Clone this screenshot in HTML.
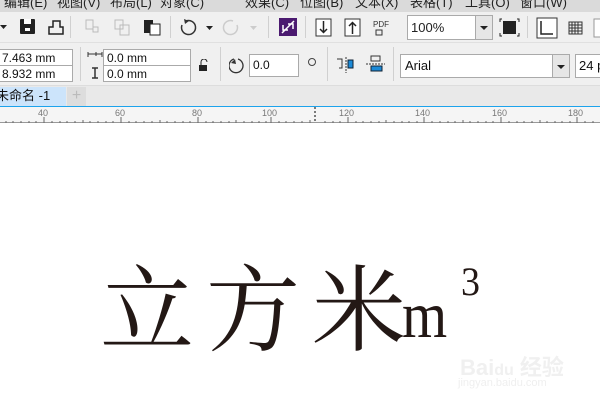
<!DOCTYPE html>
<html><head><meta charset="utf-8"><style>
*{margin:0;padding:0;box-sizing:border-box}
body{width:600px;height:400px;overflow:hidden;background:#fff;font-family:"Liberation Sans","Noto Sans CJK SC",sans-serif;position:relative}
.a{position:absolute}
.menu{left:0;top:0;width:600px;height:12px;background:#dadada;overflow:hidden}
.menu span{position:absolute;top:-8px;font-size:13px;color:#222}
.tb{left:0;top:12px;width:600px;height:31px;background:#f0f0f0;border-bottom:1px solid #e0e0e0}
.pb{left:0;top:43px;width:600px;height:43px;background:#f0f0f0;border-bottom:1px solid #ddd}
.box{position:absolute;background:#fff;border:1px solid #aaa;font-size:12px;color:#111;padding-left:3px;line-height:16px;white-space:nowrap;overflow:hidden}
.sep{position:absolute;width:1px;background:#d0d0d0}
.tabrow{left:0;top:86px;width:600px;height:20px;background:#e9e9e9}
.ruler{left:0;top:107px;width:600px;height:16px;background:#f5f5f5;border-bottom:1px solid #999}
.ruler span{position:absolute;top:1px;font-size:9px;color:#777}
.ic{position:absolute}
</style></head><body>
<div class="a menu">
<span style="left:4px">编辑(E)</span><span style="left:57px">视图(V)</span><span style="left:110px">布局(L)</span><span style="left:160px">对象(C)</span><span style="left:245px">效果(C)</span><span style="left:300px">位图(B)</span><span style="left:355px">文本(X)</span><span style="left:410px">表格(T)</span><span style="left:465px">工具(O)</span><span style="left:520px">窗口(W)</span>
</div>
<div class="a tb">
<svg class="ic" style="left:0;top:0" width="600" height="31">
<path d="M0 13h7l-3.5 4z" fill="#222"/>
<rect x="20" y="7" width="15" height="15" rx="1" fill="#222"/><rect x="24" y="7" width="7" height="5" fill="#fff"/><rect x="25" y="16" width="5" height="3" fill="#fff"/>
<path d="M53 9h7v6h3v7H49v-7h4z" fill="none" stroke="#222" stroke-width="1.5"/>
<g fill="none" stroke="#bbb"><rect x="86" y="8" width="7" height="9"/><rect x="93" y="15" width="5" height="5"/><rect x="115" y="8" width="8" height="9"/><rect x="120" y="13" width="9" height="10"/></g>
<rect x="144" y="8" width="9" height="13" fill="#222"/><rect x="150" y="12" width="10" height="11" fill="#fff" stroke="#222"/>
<path d="M186 9a7 7 0 1 1 -4 4" fill="none" stroke="#333" stroke-width="1.5"/><path d="M184 7l5 2l-4 3z" fill="#333"/>
<path d="M206 14h7l-3.5 4z" fill="#222"/>
<path d="M233 9a7 7 0 1 0 4 4" fill="none" stroke="#ccc" stroke-width="1.5"/><path d="M250 14h7l-3.5 4z" fill="#ccc"/>
<rect x="279" y="6" width="18" height="18" fill="#4b1a70"/><path d="M282 21l12-12M283 13l0 5 5 0M293 17l0-5-5 0" stroke="#fff" stroke-width="1.5" fill="none"/>
<rect x="316" y="7" width="15" height="17" fill="#fff" stroke="#333"/><path d="M323.5 9v11M320 17l3.5 3.5 3.5-3.5" stroke="#222" fill="none" stroke-width="1.5"/>
<rect x="345" y="7" width="15" height="17" fill="#fff" stroke="#333"/><path d="M352.5 22v-11M349 14l3.5-3.5 3.5 3.5" stroke="#222" fill="none" stroke-width="1.5"/>
<text x="373" y="15" font-size="8" fill="#333" font-family="Liberation Sans">PDF</text><rect x="376" y="18" width="6" height="5" fill="none" stroke="#333"/>
<rect x="503" y="9" width="13" height="13" fill="#222"/>
<path d="M502 7h-2v3M517 7h2v3M502 24h-2v-3M517 24h2v-3" stroke="#222" fill="none"/>
<rect x="537" y="6" width="20" height="20" fill="#fff" stroke="#333"/><path d="M541 9v13h12" stroke="#222" fill="none" stroke-width="1.5"/>
<g stroke="#333" fill="none"><rect x="569" y="10" width="13" height="12"/><path d="M572 10v12M575 10v12M578 10v12M569 13h13M569 16h13M569 19h13"/></g>
<rect x="594" y="7" width="8" height="18" fill="#fff" stroke="#999"/>
</svg>
<div class="sep" style="left:70px;top:4px;height:22px"></div>
<div class="sep" style="left:170px;top:4px;height:22px"></div>
<div class="sep" style="left:268px;top:4px;height:22px"></div>
<div class="sep" style="left:305px;top:4px;height:22px"></div>
<div class="sep" style="left:527px;top:4px;height:22px"></div>
<div class="box" style="left:407px;top:3px;width:86px;height:25px;line-height:23px;font-size:13px;color:#222">100%</div>
<div class="a" style="left:475px;top:4px;width:17px;height:23px;background:#e6e6e6;border-left:1px solid #aaa"><svg width="17" height="23"><path d="M4 10h8l-4 4z" fill="#222"/></svg></div>
</div>
<div class="a pb">
<div class="box" style="left:-2px;top:6px;width:75px;height:17px;font-size:12px">7.463 mm</div>
<div class="box" style="left:-2px;top:22px;width:75px;height:17px;font-size:12px">8.932 mm</div>
<div class="sep" style="left:80px;top:4px;height:34px"></div>
<svg class="ic" style="left:86px;top:8px" width="20" height="30"><path d="M2 3h14M2 1v5M16 1v5M10 1v4" stroke="#333"/><path d="M9 17v10M6 17h6M6 27h6" stroke="#333" stroke-width="1.5"/></svg>
<div class="box" style="left:103px;top:6px;width:88px;height:17px;font-size:12px">0.0 mm</div>
<div class="box" style="left:103px;top:22px;width:88px;height:17px;font-size:12px">0.0 mm</div>
<svg class="ic" style="left:198px;top:16px" width="12" height="14"><path d="M3 6V3a3 3 0 0 1 6 0" stroke="#222" fill="none"/><rect x="1" y="6" width="8" height="6" fill="#222"/></svg>
<div class="sep" style="left:220px;top:4px;height:34px"></div>
<svg class="ic" style="left:229px;top:13px" width="18" height="18"><path d="M5 3a7 7 0 1 0 4 0" stroke="#333" fill="none" stroke-width="1.3"/><path d="M2 7l4-4 1 5z" fill="#333"/></svg>
<div class="box" style="left:249px;top:11px;width:50px;height:23px;line-height:21px;font-size:12px">0.0</div>
<svg class="ic" style="left:306px;top:13px" width="12" height="12"><circle cx="6" cy="6" r="3.5" stroke="#444" fill="none"/></svg>
<div class="sep" style="left:327px;top:4px;height:34px"></div>
<svg class="ic" style="left:336px;top:14px" width="20" height="16"><path d="M1 2h5v9H3" stroke="#333" fill="none"/><path d="M10 0v16" stroke="#333" stroke-dasharray="2 1"/><rect x="12" y="3" width="5" height="8" fill="#1c8ad7" stroke="#123"/></svg>
<svg class="ic" style="left:366px;top:12px" width="20" height="18"><rect x="5" y="1" width="9" height="5" fill="none" stroke="#333"/><path d="M0 9h19" stroke="#333" stroke-dasharray="2 1"/><rect x="5" y="11" width="11" height="5" fill="#1c8ad7" stroke="#123"/></svg>
<div class="sep" style="left:393px;top:4px;height:34px"></div>
<div class="box" style="left:400px;top:11px;width:170px;height:24px;line-height:22px;font-size:13px;padding-left:4px">Arial</div>
<div class="a" style="left:552px;top:12px;width:17px;height:22px;background:#e6e6e6;border-left:1px solid #aaa"><svg width="17" height="22"><path d="M4 10h8l-4 4z" fill="#222"/></svg></div>
<div class="box" style="left:575px;top:11px;width:30px;height:24px;line-height:22px;font-size:13px">24 p</div>
</div>
<div class="a tabrow">
<div class="a" style="left:0;top:1px;width:66px;height:19px;background:#cce4fb;font-size:13px;line-height:18px;color:#111;overflow:hidden;white-space:nowrap">
<span style="margin-left:-4px">未命名 -1</span></div>
<div class="a" style="left:67px;top:1px;width:19px;height:19px;background:#ddd;color:#bbb;font-size:16px;text-align:center;line-height:18px">+</div>
</div>
<div class="a" style="left:0;top:106px;width:600px;height:1px;background:#1ca3ec"></div>
<div class="a ruler">
<svg class="a" style="left:0;top:0" width="600" height="16">
<g stroke="#666">
<path d="M44 10v6M121 10v6M198 10v6M271 10v6M348 10v6M424 10v6M501 10v6M577 10v6"/>
<path d="M6 14v2M13 14v2M21 14v2M29 14v2M36 14v2M52 14v2M60 14v2M67 14v2M75 14v2M83 13v3M90 14v2M98 14v2M106 14v2M113 14v2M129 14v2M136 14v2M144 14v2M152 14v2M160 13v3M167 14v2M175 14v2M183 14v2M190 14v2M206 14v2M213 14v2M221 14v2M229 14v2M236 13v3M244 14v2M252 14v2M259 14v2M266 14v2M279 14v2M286 14v2M294 14v2M302 14v2M310 13v3M325 14v2M333 14v2M340 14v2M356 14v2M363 14v2M371 14v2M379 14v2M386 13v3M394 14v2M402 14v2M409 14v2M417 14v2M432 14v2M440 14v2M448 14v2M455 14v2M463 13v3M470 14v2M478 14v2M486 14v2M493 14v2M509 14v2M517 14v2M524 14v2M532 14v2M540 13v3M547 14v2M555 14v2M562 14v2M570 14v2M585 14v2M593 14v2"/>
</g>
<path d="M315 0v16" stroke="#000" stroke-dasharray="2 2"/>
</svg>
<span style="left:38px">40</span><span style="left:115px">60</span><span style="left:192px">80</span><span style="left:262px">100</span><span style="left:339px">120</span><span style="left:415px">140</span><span style="left:492px">160</span><span style="left:568px">180</span>
</div>
<div class="a" style="left:100px;top:243px;font-family:'Noto Serif CJK SC',serif;font-size:94px;line-height:120px;color:#231815;letter-spacing:12px;white-space:nowrap">立方米</div>
<div class="a" style="left:402px;top:276px;font-family:'Liberation Serif',serif;font-size:66px;line-height:80px;color:#231815;transform:scaleX(0.88);transform-origin:0 0">m</div>
<div class="a" style="left:461px;top:260px;font-family:'Liberation Serif',serif;font-size:40px;line-height:44px;color:#231815;transform:scaleX(0.95);transform-origin:0 0">3</div>
<div class="a" style="left:460px;top:350px;font-size:22px;color:#f0f0f0;font-weight:bold">Bai<span style="font-size:16px">du</span> 经验</div>
<div class="a" style="left:458px;top:377px;font-size:11px;color:#efefef">jingyan.baidu.com</div>
</body></html>
